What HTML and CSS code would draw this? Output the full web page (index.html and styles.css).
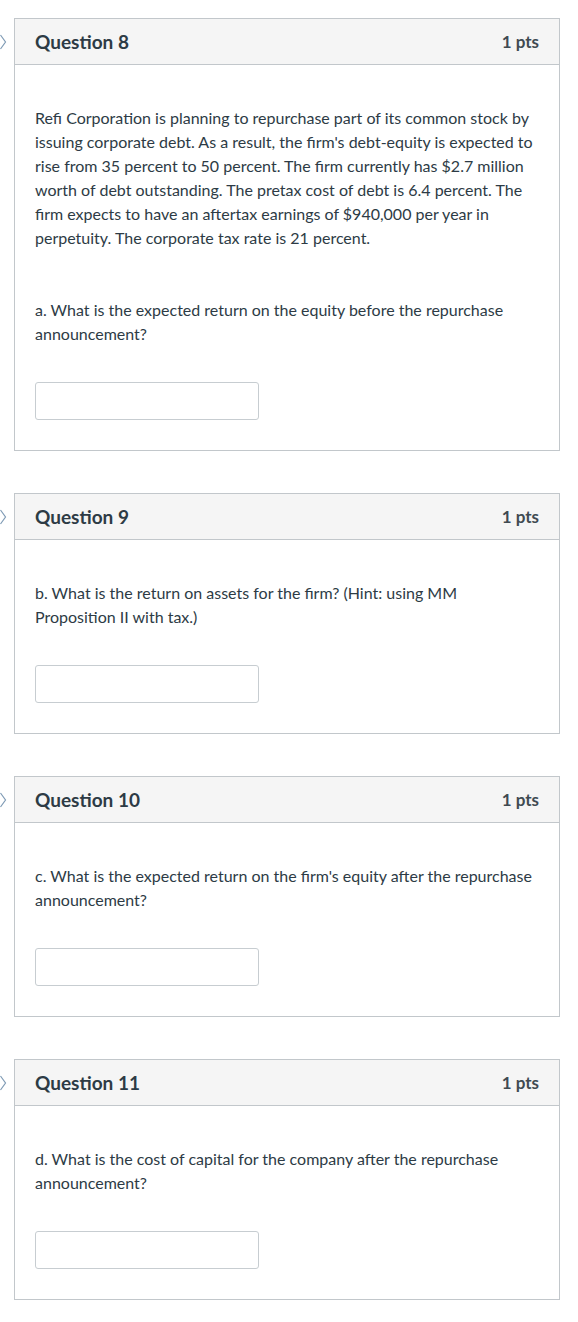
FILE: index.html
```html
<!DOCTYPE html>
<html>
<head>
<meta charset="utf-8">
<link rel="stylesheet" href="styles.css">
</head>
<body>
<div class="quiz">
  <div class="question">
    <svg class="marker" width="8" height="16" viewBox="0 0 8 16"><path d="M0.5 1 L5.5 8 L0.5 15" fill="none" stroke="#7f9bb5" stroke-width="1.2"/></svg>
    <div class="q-header"><span class="q-title">Question 8</span><span class="q-pts">1 pts</span></div>
    <div class="q-body">
      <p class="q-text">Refi Corporation is planning to repurchase part of its common stock by issuing corporate debt. As a result, the firm's debt-equity is expected to rise from 35 percent to 50 percent. The firm currently has $2.7 million worth of debt outstanding. The pretax cost of debt is 6.4 percent. The firm expects to have an aftertax earnings of $940,000 per year in perpetuity. The corporate tax rate is 21 percent.</p>
      <p class="q-text q-gap">a. What is the expected return on the equity before the repurchase announcement?</p>
      <div class="answer"></div>
    </div>
  </div>
  <div class="question">
    <svg class="marker" width="8" height="16" viewBox="0 0 8 16"><path d="M0.5 1 L5.5 8 L0.5 15" fill="none" stroke="#7f9bb5" stroke-width="1.2"/></svg>
    <div class="q-header"><span class="q-title">Question 9</span><span class="q-pts">1 pts</span></div>
    <div class="q-body">
      <p class="q-text">b. What is the return on assets for the firm? (Hint: using MM Proposition II with tax.)</p>
      <div class="answer"></div>
    </div>
  </div>
  <div class="question">
    <svg class="marker" width="8" height="16" viewBox="0 0 8 16"><path d="M0.5 1 L5.5 8 L0.5 15" fill="none" stroke="#7f9bb5" stroke-width="1.2"/></svg>
    <div class="q-header"><span class="q-title">Question 10</span><span class="q-pts">1 pts</span></div>
    <div class="q-body">
      <p class="q-text">c. What is the expected return on the firm's equity after the repurchase announcement?</p>
      <div class="answer"></div>
    </div>
  </div>
  <div class="question">
    <svg class="marker" width="8" height="16" viewBox="0 0 8 16"><path d="M0.5 1 L5.5 8 L0.5 15" fill="none" stroke="#7f9bb5" stroke-width="1.2"/></svg>
    <div class="q-header"><span class="q-title">Question 11</span><span class="q-pts">1 pts</span></div>
    <div class="q-body">
      <p class="q-text">d. What is the cost of capital for the company after the repurchase announcement?</p>
      <div class="answer"></div>
    </div>
  </div>
</div>
</body>
</html>
```
FILE: styles.css
```css
html, body {
  margin: 0;
  padding: 0;
  background: #ffffff;
}
body {
  font-family: Lato, "Open Sans", sans-serif;
  color: #2d3b45;
}
.quiz {
  display: flex;
  flex-direction: column;
  gap: 42px;
  padding: 18px 0 0 14px;
  width: 546px;
}
.question {
  position: relative;
  border: 1px solid #c2c7cb;
  background: #ffffff;
}
.marker {
  position: absolute;
  left: -15px;
  top: 15px;
}
.q-header {
  display: flex;
  justify-content: space-between;
  align-items: center;
  height: 45px;
  padding: 0 20px;
  background: #f5f5f5;
  border-bottom: 1px solid #c2c7cb;
}
.q-title {
  font-size: 19px;
  font-weight: 700;
  color: #2d3b45;
}
.q-pts {
  font-size: 17px;
  font-weight: 700;
  color: #3f4a52;
}
.q-body {
  padding: 41px 20px 30px;
}
.q-text {
  margin: 0;
  font-size: 16px;
  line-height: 24px;
}
.q-gap {
  margin-top: 48px;
}
.answer {
  margin-top: 36px;
  width: 222px;
  height: 36px;
  border: 1px solid #c7cdd1;
  border-radius: 3px;
  background: #fff;
}
```
